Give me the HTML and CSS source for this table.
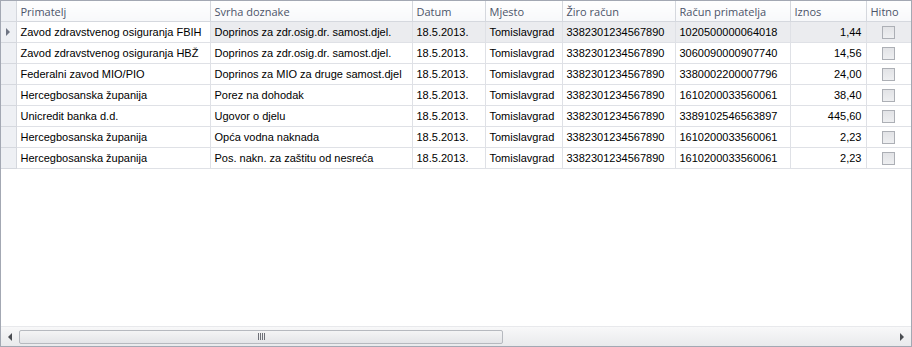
FILE: index.html
```html
<!DOCTYPE html>
<html>
<head>
<meta charset="utf-8">
<link rel="stylesheet" href="styles.css">
</head>
<body>
<div class="grid">
  <div class="body">
    <table class="tbl">
      <colgroup>
        <col class="c-ind"><col class="c-prim"><col class="c-svrha"><col class="c-dat"><col class="c-mj"><col class="c-ziro"><col class="c-rac"><col class="c-iz"><col class="c-hit">
      </colgroup>
      <thead>
        <tr>
          <th class="ind"></th><th>Primatelj</th><th>Svrha doznake</th><th>Datum</th><th>Mjesto</th><th>Žiro račun</th><th>Račun primatelja</th><th>Iznos</th><th>Hitno</th>
        </tr>
      </thead>
      <tbody>
        <tr class="sel">
          <td class="ind"><span class="arrow"></span></td><td class="focus">Zavod zdravstvenog osiguranja FBIH</td><td>Doprinos za zdr.osig.dr. samost.djel.</td><td>18.5.2013.</td><td>Tomislavgrad</td><td>3382301234567890</td><td>1020500000064018</td><td class="num">1,44</td><td class="chk"><span class="box"></span></td>
        </tr>
        <tr>
          <td class="ind"></td><td>Zavod zdravstvenog osiguranja HBŽ</td><td>Doprinos za zdr.osig.dr. samost.djel.</td><td>18.5.2013.</td><td>Tomislavgrad</td><td>3382301234567890</td><td>3060090000907740</td><td class="num">14,56</td><td class="chk"><span class="box"></span></td>
        </tr>
        <tr>
          <td class="ind"></td><td>Federalni zavod MIO/PIO</td><td>Doprinos za MIO za druge samost.djel</td><td>18.5.2013.</td><td>Tomislavgrad</td><td>3382301234567890</td><td>3380002200007796</td><td class="num">24,00</td><td class="chk"><span class="box"></span></td>
        </tr>
        <tr>
          <td class="ind"></td><td>Hercegbosanska županija</td><td>Porez na dohodak</td><td>18.5.2013.</td><td>Tomislavgrad</td><td>3382301234567890</td><td>1610200033560061</td><td class="num">38,40</td><td class="chk"><span class="box"></span></td>
        </tr>
        <tr>
          <td class="ind"></td><td>Unicredit banka d.d.</td><td>Ugovor o djelu</td><td>18.5.2013.</td><td>Tomislavgrad</td><td>3382301234567890</td><td>3389102546563897</td><td class="num">445,60</td><td class="chk"><span class="box"></span></td>
        </tr>
        <tr>
          <td class="ind"></td><td>Hercegbosanska županija</td><td>Opća vodna naknada</td><td>18.5.2013.</td><td>Tomislavgrad</td><td>3382301234567890</td><td>1610200033560061</td><td class="num">2,23</td><td class="chk"><span class="box"></span></td>
        </tr>
        <tr>
          <td class="ind"></td><td>Hercegbosanska županija</td><td>Pos. nakn. za zaštitu od nesreća</td><td>18.5.2013.</td><td>Tomislavgrad</td><td>3382301234567890</td><td>1610200033560061</td><td class="num">2,23</td><td class="chk"><span class="box"></span></td>
        </tr>
      </tbody>
    </table>
  </div>
  <div class="hscroll">
    <span class="btn left"></span>
    <div class="track">
      <div class="thumb"><span class="grip"></span></div>
    </div>
    <span class="btn right"></span>
  </div>
</div>
</body>
</html>
```

FILE: styles.css
```css
html, body {
  margin: 0;
  padding: 0;
  background: #ffffff;
}
.grid {
  width: 912px;
  height: 347px;
  box-sizing: border-box;
  border: 1px solid #a3a8b3;
  display: flex;
  flex-direction: column;
  font-family: "Liberation Sans", Arial, sans-serif;
  font-size: 11px;
  color: #000;
  background: #fff;
}
.body {
  flex: 1;
  overflow: hidden;
}
.tbl {
  border-collapse: collapse;
  table-layout: fixed;
  width: 910px;
}
.c-ind { width: 15px; }
.c-prim { width: 194px; }
.c-svrha { width: 202px; }
.c-dat { width: 73px; }
.c-mj { width: 77px; }
.c-ziro { width: 113px; }
.c-rac { width: 115px; }
.c-iz { width: 76px; }
.c-hit { width: 45px; }

th {
  height: 20px;
  padding: 0 0 0 4px;
  text-align: left;
  font-weight: normal;
  color: #4c5469;
  font-family: "Open Sans", "Liberation Sans", sans-serif;
  font-size: 11px;
  background: linear-gradient(#ffffff, #f7f8fa);
  border-right: 1px solid #d5d8de;
  border-bottom: 1px solid #d5d8de;
  white-space: nowrap;
  overflow: hidden;
}
th:last-child { border-right: none; }
td {
  height: 20px;
  padding: 0 4px;
  border-right: 1px solid #dfe1e6;
  border-bottom: 1px solid #dfe1e6;
  white-space: nowrap;
  overflow: hidden;
}
td:last-child { border-right: none; }
.ind {
  padding: 0;
  background: #eef0f4;
  border-right: 1px solid #d5d8de;
  border-bottom: 1px solid #d5d8de;
}
th.ind { background: #eef0f4; }
.sel td { background: #ebecef; }
.sel td.ind { background: #eef0f4; }
.sel td.focus { background: #ffffff; }
.arrow {
  display: block;
  width: 0;
  height: 0;
  margin-left: 5px;
  border-top: 4px solid transparent;
  border-bottom: 4px solid transparent;
  border-left: 4px solid #6e7482;
}
.num { text-align: right; }
.chk { text-align: center; padding: 0; }
.box {
  display: inline-block;
  vertical-align: middle;
  width: 11px;
  height: 11px;
  border: 1px solid #acafb5;
  background: linear-gradient(#e2e3e6, #eeeff1);
}
.hscroll {
  height: 19px;
  display: flex;
  align-items: center;
  background: linear-gradient(#f8f8f9, #e9eaec);
  border-top: 1px solid #e8e9ec;
}
.btn {
  width: 18px;
  height: 17px;
  display: flex;
  align-items: center;
  justify-content: center;
  flex: none;
}
.btn.left::before {
  content: "";
  border-top: 4px solid transparent;
  border-bottom: 4px solid transparent;
  border-right: 4px solid #4a4d52;
}
.btn.right::before {
  content: "";
  border-top: 4px solid transparent;
  border-bottom: 4px solid transparent;
  border-left: 4px solid #4a4d52;
}
.track {
  flex: 1;
  height: 17px;
  display: flex;
  align-items: center;
}
.thumb {
  width: 484px;
  height: 14px;
  box-sizing: border-box;
  border: 1px solid #b6b9bf;
  border-radius: 2px;
  background: linear-gradient(#f4f4f5, #e4e5e8);
  display: flex;
  align-items: center;
  justify-content: center;
}
.grip {
  width: 7px;
  height: 7px;
  background: repeating-linear-gradient(90deg, #6e7077 0 1px, transparent 1px 2px);
}
```
